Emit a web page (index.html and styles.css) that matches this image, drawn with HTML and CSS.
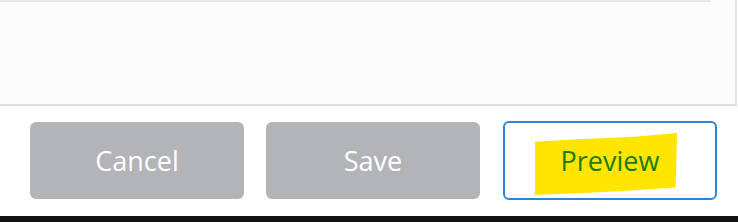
FILE: index.html
```html
<!DOCTYPE html>
<html lang="en">
<head>
    <meta charset="UTF-8">
    <meta name="viewport" content="width=device-width, initial-scale=1.0">
    <title>Preview</title>
    <link rel="stylesheet" href="styles.css">
</head>
<body>
    <div class="panel">
        <div class="field"></div>
    </div>
    <div class="actions">
        <button class="btn btn-grey">Cancel</button>
        <button class="btn btn-grey">Save</button>
        <button class="btn btn-outline">
            <span class="marker"></span>
            <span class="label">Preview</span>
        </button>
    </div>
    <div class="taskbar"></div>
</body>
</html>
```

FILE: styles.css
```css
body {
    margin: 0;
    padding: 0;
    width: 738px;
    height: 222px;
    background: #fff;
    font-family: "Open Sans", Arial, sans-serif;
    overflow: hidden;
    display: flex;
    flex-direction: column;
}
.panel {
    height: 104px;
    width: 735px;
    background: #fcfcfc;
    border-right: 2px solid #e3e3e3;
    border-bottom: 2px solid #dedede;
}
.field {
    width: 711px;
    height: 0;
    border-bottom: 2px solid #e6e6e6;
}
.actions {
    flex-grow: 1;
    display: flex;
    align-items: center;
    gap: 22px;
    padding-left: 30px;
    padding-bottom: 1px;
}
.btn {
    position: relative;
    width: 214px;
    height: 77px;
    border-radius: 6px;
    font-family: "Open Sans", Arial, sans-serif;
    font-size: 27px;
    padding: 0;
    cursor: pointer;
}
.btn-grey {
    background: #b3b4b7;
    border: none;
    color: #fff;
}
.btn-outline {
    margin-left: 1px;
    height: 79px;
    background: #fff;
    border: 2px solid #2a86d9;
    color: #1d7a14;
}
.marker {
    position: absolute;
    left: 30px;
    top: 10px;
    width: 142px;
    height: 62px;
    background: #ffe500;
    clip-path: polygon(0 14%, 30% 10%, 70% 6%, 100% 0, 99% 88%, 60% 94%, 0 100%);
}
.label {
    position: relative;
}
.taskbar {
    height: 6px;
    background: #121212;
}
```
